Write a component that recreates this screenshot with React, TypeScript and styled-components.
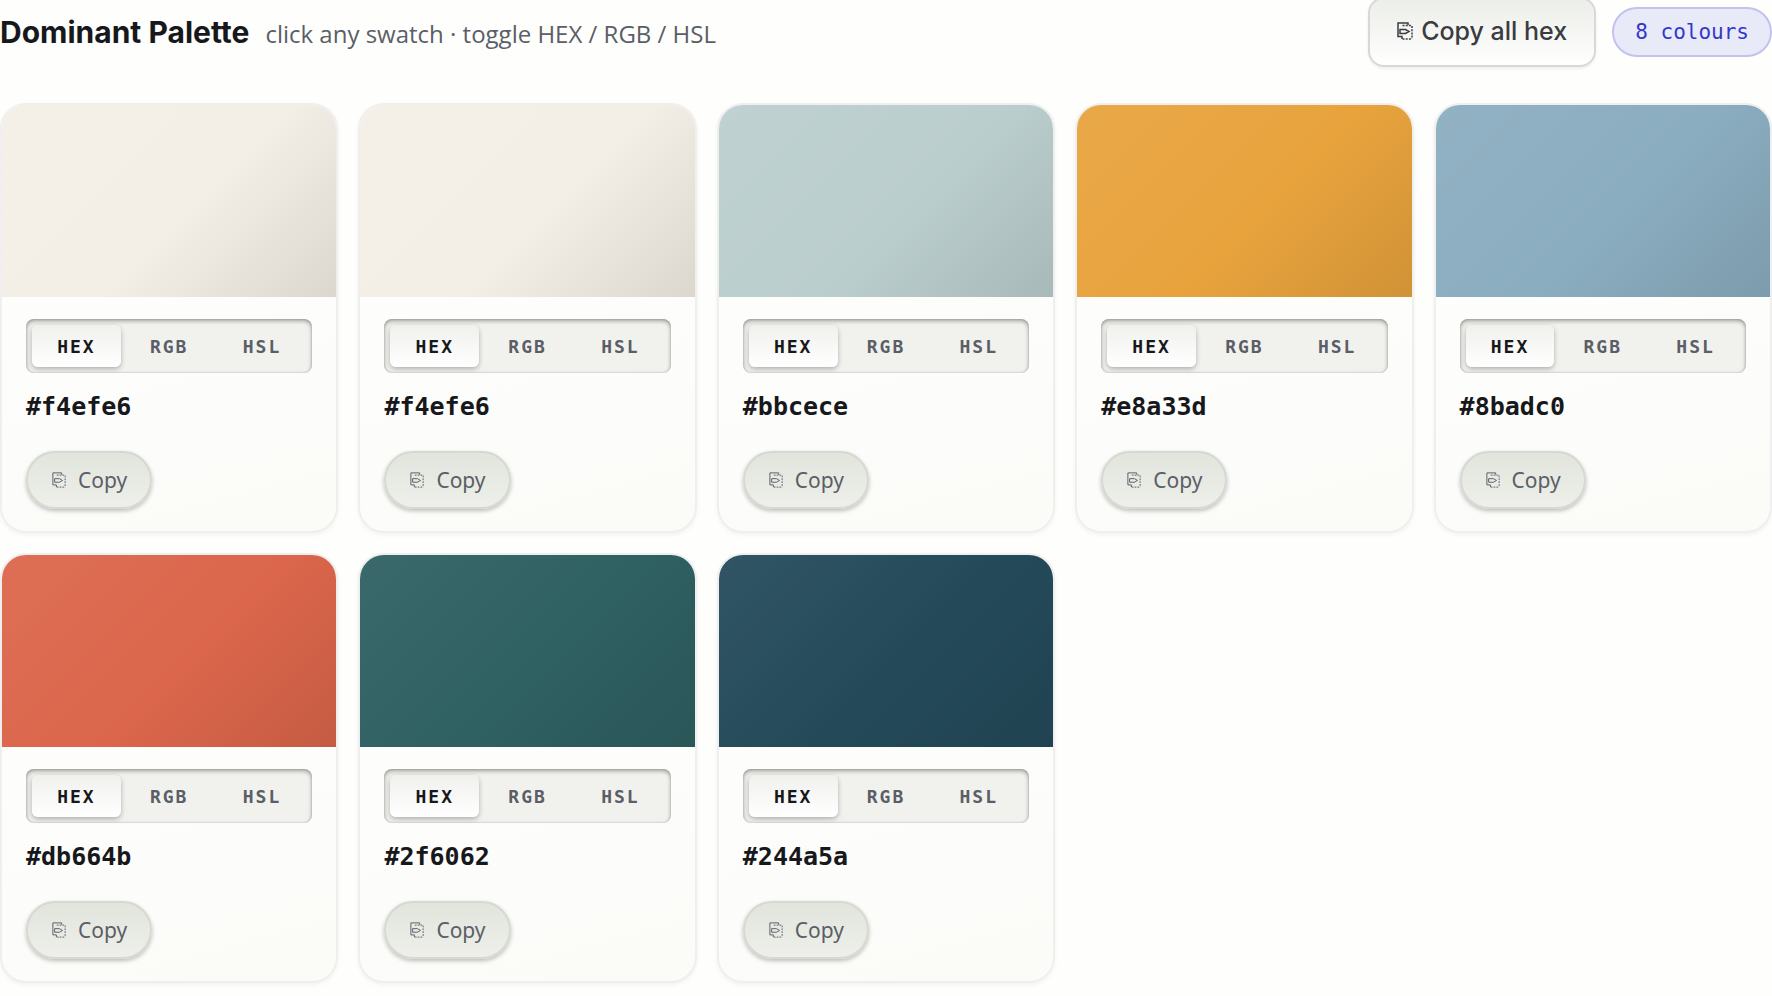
import React, { useState } from "react";
import styled, { createGlobalStyle } from "styled-components";

const sans = `Inter, "Liberation Sans", sans-serif`;
const humanist = `"Open Sans", "Noto Sans", sans-serif`;
const mono = `"DejaVu Sans Mono", monospace`;

const GlobalStyle = createGlobalStyle`
  *, *::before, *::after { box-sizing: border-box; }
  body {
    margin: 0;
    background: #fefefd;
    color: #17181b;
    font-family: ${sans};
  }
  button { margin: 0; cursor: pointer; }
`;

const Page = styled.main`
  padding-bottom: 12px;
`;

const Header = styled.header`
  display: flex;
  align-items: center;
  justify-content: space-between;
  height: 64px;
  margin-bottom: 39px;
`;

const Heading = styled.div`
  display: flex;
  align-items: baseline;
  gap: 16px;
  padding-top: 2px;
`;

const Title = styled.h2`
  margin: 0;
  font-size: 30px;
  line-height: 36px;
  font-weight: 700;
`;

const Hint = styled.span`
  font-family: ${humanist};
  font-size: 24px;
  line-height: 36px;
  color: #5b5e66;
`;

const Actions = styled.div`
  display: flex;
  align-items: center;
  gap: 16px;
`;

const CopyAll = styled.button`
  display: flex;
  align-items: center;
  gap: 8px;
  height: 70px;
  padding: 0 27px 2px;
  border: 2px solid #d8d8d8;
  border-radius: 16px;
  background: linear-gradient(#eceee8, #ffffff);
  box-shadow: 0 2px 3px rgba(0, 0, 0, 0.06);
  color: #3a3c41;
  font-family: ${sans};
  font-size: 25px;
  font-weight: 500;
`;

const Count = styled.span`
  padding: 0 21px;
  border: 2px solid #c3c2ee;
  border-radius: 25px;
  background: #e9eaf8;
  color: #3338c8;
  font-family: ${mono};
  font-size: 21px;
  line-height: 46px;
`;

const Grid = styled.section`
  display: grid;
  grid-template-columns: repeat(5, minmax(0, 1fr));
  gap: 20px;
`;

const Card = styled.article`
  overflow: hidden;
  border: 2px solid #efefef;
  border-radius: 26px;
  background: linear-gradient(165deg, #ffffff, #fbfbf8);
  box-shadow: 0 2px 4px rgba(0, 0, 0, 0.05);
`;

const Swatch = styled.button<{ $color: string }>`
  display: block;
  width: 100%;
  height: 192px;
  padding: 0;
  border: 0;
  background:
    linear-gradient(135deg, rgba(255, 255, 255, 0.06), transparent 55%, rgba(0, 0, 0, 0.1)),
    ${(p) => p.$color};
`;

const CardBody = styled.div`
  display: flex;
  flex-direction: column;
  align-items: flex-start;
  padding: 22px 24px;
`;

const Formats = styled.div`
  display: grid;
  grid-template-columns: repeat(3, 1fr);
  gap: 4px;
  align-self: stretch;
  padding: 6px;
  border-radius: 8px;
  background: #f1f2ee;
  box-shadow:
    inset 0 2px 4px rgba(0, 0, 0, 0.35),
    inset 0 0 2px rgba(0, 0, 0, 0.2);
`;

const Format = styled.button<{ $active: boolean }>`
  height: 42px;
  padding: 0;
  border: 0;
  border-radius: 6px;
  background: ${(p) => (p.$active ? "linear-gradient(#f0f1ed, #ffffff)" : "transparent")};
  box-shadow: ${(p) => (p.$active ? "0 2px 5px rgba(0, 0, 0, 0.28)" : "none")};
  color: ${(p) => (p.$active ? "#17181b" : "#5b5e66")};
  font-family: ${mono};
  font-size: 18px;
  font-weight: 700;
  letter-spacing: 2px;
`;

const Value = styled.output`
  margin: 18px 0 28px;
  font-family: ${mono};
  font-size: 25px;
  font-weight: 700;
  line-height: 32px;
`;

const Copy = styled.button`
  display: flex;
  align-items: center;
  gap: 12px;
  height: 58px;
  padding: 0 23px 0 24px;
  border: 2px solid #d6d8d2;
  border-radius: 29px;
  background: linear-gradient(#e1e5dc, #eeefea);
  box-shadow: 0 2px 4px rgba(0, 0, 0, 0.25);
  color: #5b5e66;
  font-family: "Noto Sans", sans-serif;
  font-size: 21px;
`;

/* Next-page symbol: a solid sheet behind a dashed one, with an arrow between them. */
function NextPageIcon({ width, height, weight }: { width: number; height: number; weight: number }) {
  return (
    <svg
      width={width}
      height={height}
      viewBox="0 0 16 18"
      preserveAspectRatio="none"
      fill="none"
      stroke="currentColor"
      strokeWidth={weight}
      aria-hidden="true"
    >
      <path d="M11 3V1H1V14.5H5V17" />
      <path d="M5.5 3.5H15M5.5 17H15M15 4V17" strokeDasharray="2 1.2" />
      <path d="M3 7.5H8.5L12 9.5L8.5 11.5H3Z" />
    </svg>
  );
}

const palette = [
  "#f4efe6",
  "#f4efe6",
  "#bbcece",
  "#e8a33d",
  "#8badc0",
  "#db664b",
  "#2f6062",
  "#244a5a",
];

const formats = ["HEX", "RGB", "HSL"] as const;
type FormatName = (typeof formats)[number];

function convert(hex: string, format: FormatName): string {
  if (format === "HEX") return hex;
  const [r, g, b] = [1, 3, 5].map((i) => parseInt(hex.slice(i, i + 2), 16));
  if (format === "RGB") return `${r}, ${g}, ${b}`;
  const max = Math.max(r, g, b) / 255;
  const min = Math.min(r, g, b) / 255;
  const d = max - min;
  const l = (max + min) / 2;
  const s = d === 0 ? 0 : d / (1 - Math.abs(2 * l - 1));
  let h = 0;
  if (d !== 0) {
    if (max === r / 255) h = ((g - b) / 255 / d + 6) % 6;
    else if (max === g / 255) h = (b - r) / 255 / d + 2;
    else h = (r - g) / 255 / d + 4;
  }
  return `${Math.round(h * 60)}, ${Math.round(s * 100)}%, ${Math.round(l * 100)}%`;
}

function ColorCard({ hex }: { hex: string }) {
  const [format, setFormat] = useState<FormatName>("HEX");
  const value = convert(hex, format);
  const copy = () => navigator.clipboard?.writeText(value);
  return (
    <Card>
      <Swatch type="button" $color={hex} aria-label={hex} onClick={copy} />
      <CardBody>
        <Formats role="group">
          {formats.map((name) => (
            <Format
              key={name}
              type="button"
              $active={name === format}
              aria-pressed={name === format}
              onClick={() => setFormat(name)}
            >
              {name}
            </Format>
          ))}
        </Formats>
        <Value>{value}</Value>
        <Copy type="button" onClick={copy}>
          <NextPageIcon width={14} height={16} weight={1.1} />
          Copy
        </Copy>
      </CardBody>
    </Card>
  );
}

export default function App() {
  return (
    <>
      <GlobalStyle />
      <Page>
        <Header>
          <Heading>
            <Title>Dominant Palette</Title>
            <Hint>click any swatch · toggle HEX / RGB / HSL</Hint>
          </Heading>
          <Actions>
            <CopyAll type="button" onClick={() => navigator.clipboard?.writeText(palette.join("\n"))}>
              <NextPageIcon width={16} height={18} weight={1.5} />
              Copy all hex
            </CopyAll>
            <Count>{palette.length} colours</Count>
          </Actions>
        </Header>
        <Grid>
          {palette.map((hex, i) => (
            <ColorCard key={i} hex={hex} />
          ))}
        </Grid>
      </Page>
    </>
  );
}
